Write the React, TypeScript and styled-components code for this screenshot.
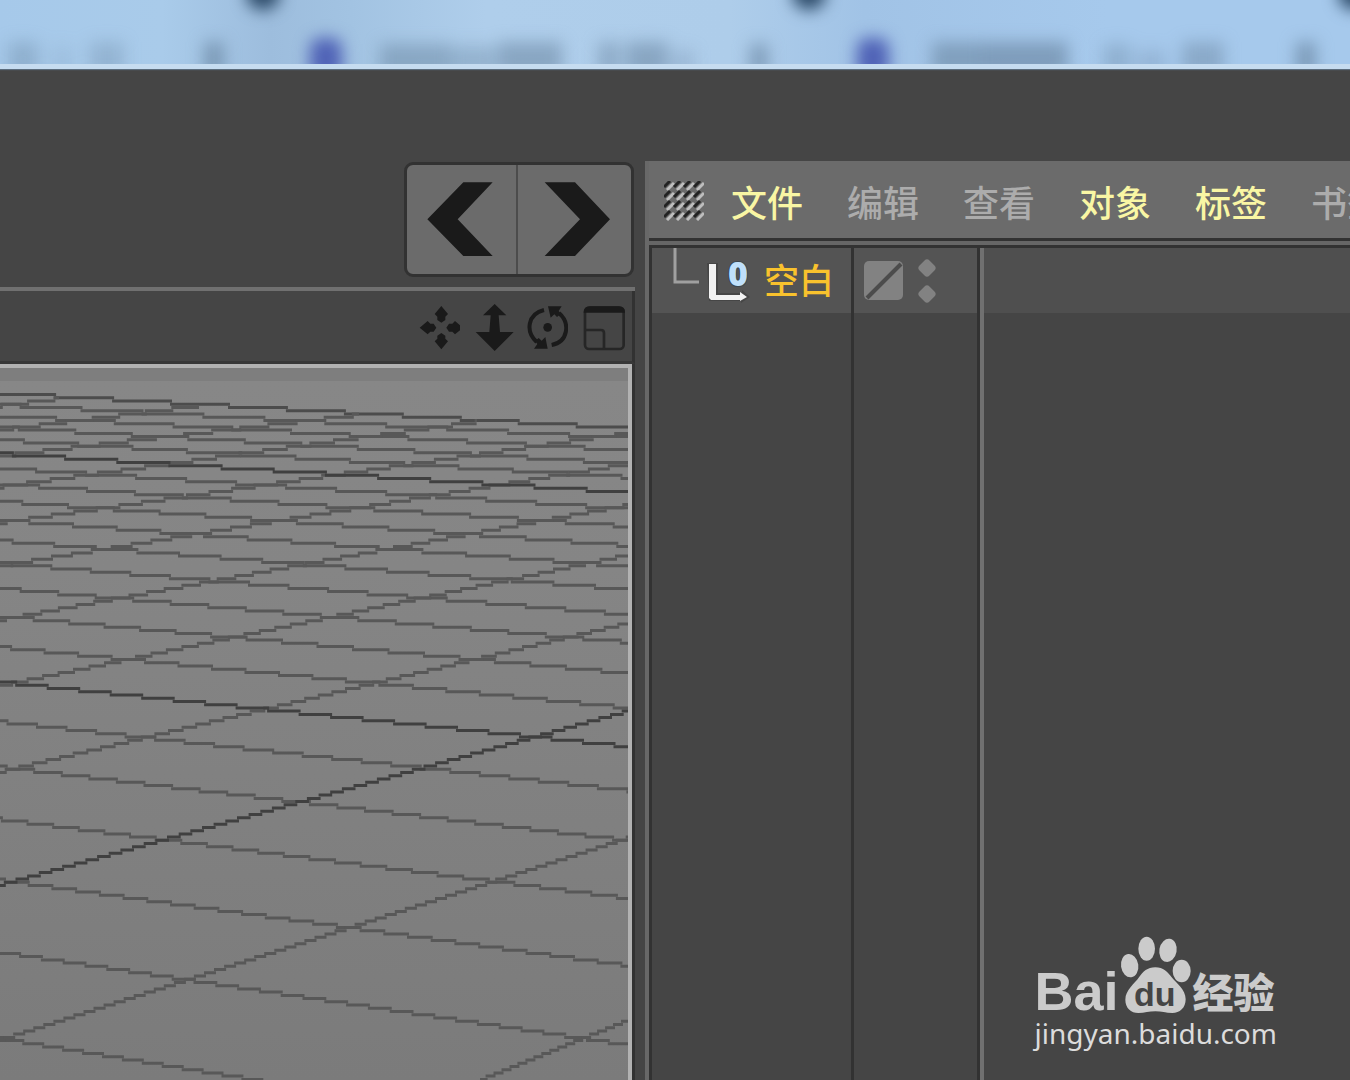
import React from "react";
import styled, { createGlobalStyle } from "styled-components";

const color = {
  base: "#454545",
  raised: "#6b6b6b",
  edge: "#323232",
  ink: "#1a1a1a",
  mark: "#cbcbcb",
};

const cjk = `"Noto Sans CJK SC", "Noto Sans", sans-serif`;

const GlobalStyle = createGlobalStyle`
  *, *::before, *::after { box-sizing: border-box; }
  body { margin: 0; background: ${color.base}; font-family: ${cjk}; }
`;

const Page = styled.div`
  position: relative;
  display: flex;
  flex-direction: column;
  height: 100vh;
  overflow: hidden;
  background: ${color.base};
`;

const Backdrop = styled.header`
  flex: none;
  height: 69px;
  overflow: hidden;
  background: linear-gradient(90deg, #a6c9ea 0%, #a9cbea 12%, #9dbddd 20%, #a2c3e2 26%, #afceeb 36%, #aecdea 54%, #a1c3e6 64%, #a6c9ec 82%, #a6c9ec 100%);
  border-bottom: 5px solid #c6dcf0;
  box-shadow: 0 1px 1px #5b6c7c;

  svg {
    display: block;
    width: 100%;
    height: 64px;
  }
`;

const Workspace = styled.main`
  flex: 1;
  min-height: 0;
  display: grid;
  grid-template-columns: minmax(0, 635fr) minmax(0, 715fr);
`;

const LeftColumn = styled.section`
  display: flex;
  flex-direction: column;
  min-height: 0;
  padding-top: 93px;
`;

const HistoryButtons = styled.div`
  align-self: flex-end;
  display: flex;
  width: 230px;
  height: 115px;
  margin: 0 1px 10px 0;
  overflow: hidden;
  border: 3px solid ${color.edge};
  border-radius: 9px;
  background: ${color.raised};
`;

const HistoryButton = styled.button<{ $divided?: boolean }>`
  flex: ${(p) => (p.$divided ? "0 0 111px" : "1")};
  padding: 0;
  border: 0;
  border-right: ${(p) => (p.$divided ? "2px solid #4c4c4c" : "0")};
  background: none;
  color: ${color.ink};

  svg {
    display: block;
    margin: 0 auto;
  }
`;

const ViewPanel = styled.div`
  flex: 1;
  min-height: 0;
  display: flex;
  flex-direction: column;
  border-top: 4px solid #707070;
`;

const ViewTools = styled.div`
  display: flex;
  justify-content: flex-end;
  gap: 10px;
  height: 73px;
  padding: 12px 6px 0 0;
  border-right: 3px solid ${color.edge};
  border-bottom: 3px solid #383838;
`;

const ToolButton = styled.button`
  height: 48px;
  padding: 0;
  border: 0;
  background: none;
  color: ${color.ink};

  svg {
    display: block;
  }
`;

const Canvas = styled.div`
  flex: 1;
  min-height: 0;
  display: flex;
  border-right: 3px solid ${color.edge};

  svg {
    flex: 1;
    min-width: 0;
    height: 100%;
    border-top: 4px solid #b2b2b2;
    border-right: 4px solid #b2b2b2;
    background: linear-gradient(#7e7e7e 0 13px, #878787 13px, #858585 200px, #7b7b7b 100%);
  }
`;

const ObjectManager = styled.section`
  display: flex;
  flex-direction: column;
  min-width: 0;
  min-height: 0;
  margin: 92px 0 0 10px;
  border-left: 4px solid #686868;
`;

const MenuBar = styled.nav`
  display: flex;
  align-items: center;
  gap: 44px;
  height: 84px;
  padding: 0 0 4px 15px;
  overflow: hidden;
  background: linear-gradient(${color.raised} 0 77px, ${color.edge} 77px 80px, #666 80px);
`;

const Grip = styled.svg`
  flex: none;
  margin-right: -17px;
`;

const MenuItem = styled.button<{ $active?: boolean }>`
  flex: none;
  padding: 0;
  border: 0;
  background: none;
  color: ${(p) => (p.$active ? "#f9f6a4" : "#acacac")};
  font: 500 36px/52px ${cjk};
  white-space: nowrap;
`;

const ObjectList = styled.div`
  flex: 1;
  min-height: 0;
  display: grid;
  grid-template-columns: 202px 126px minmax(0, 1fr);
  border-top: 3px solid ${color.edge};
  border-left: 3px solid ${color.edge};
`;

const Column = styled.div<{ $divided?: boolean; $lit?: boolean }>`
  border-left: ${(p) => (p.$lit ? "4px solid #707070" : "0")};
  border-right: ${(p) => (p.$divided ? `3px solid ${color.edge}` : "0")};
`;

const Cell = styled.div<{ $dim?: boolean }>`
  display: flex;
  align-items: center;
  height: 65px;
  background: ${(p) => (p.$dim ? "#4f4f4f" : "#545454")};

  svg {
    flex: none;
  }
`;

const ObjectName = styled.button`
  padding: 0 0 4px 12px;
  border: 0;
  background: none;
  color: #f9c22d;
  font: 500 35px/52px ${cjk};
  white-space: nowrap;
`;

const CellButton = styled.button`
  padding: 0;
  margin-left: 10px;
  border: 0;
  background: none;
  color: #828282;

  svg {
    display: block;
  }
`;

const Watermark = styled.a`
  position: absolute;
  right: 73px;
  bottom: 28px;
  display: flex;
  flex-direction: column;
  color: ${color.mark};
  text-decoration: none;
`;

const Brand = styled.span`
  display: flex;
  align-items: flex-end;
  height: 78px;
`;

const Latin = styled.span`
  font: 700 54px/46px "Liberation Sans", Arial, sans-serif;
`;

const Han = styled.span`
  font: 900 41px/48px ${cjk};
`;

const Address = styled.span`
  font: 400 28px/38px "Noto Sans", sans-serif;
  color: #dcdcdc;
`;

/* ---- perspective floor grid ---- */

const PITCH = 3.23;
const FIRST_ROW = 26.6;
const WIDTH = 628;

type GridLine = { x0: number; y0: number; x1: number; y1: number; strong?: boolean };

const horizonEdge: GridLine = { x0: 0, y0: 25.2, x1: WIDTH, y1: 60.2 };

const receding: GridLine[] = Array.from({ length: 21 }, (_, i) => {
  const n = i - 4;
  return {
    x0: 0,
    y0: 9506 / (26 - n) - 280,
    x1: WIDTH,
    y1: 10675 / (26.1 - n) - 284.5,
    strong: n === 0 || n === 10,
  };
});

const crossing: GridLine[] = [
  { x0: 0, y0: 38, x1: 57, y1: 31 },
  { x0: 0, y0: 62, x1: 197, y1: 38 },
  { x0: 0, y0: 88, x1: 357, y1: 47 },
  { x0: 0, y0: 119, x1: 475, y1: 54 },
  { x0: 0, y0: 155, x1: WIDTH, y1: 65 },
  { x0: 0, y0: 198, x1: WIDTH, y1: 96 },
  { x0: 0, y0: 252, x1: WIDTH, y1: 137 },
  { x0: 0, y0: 318, x1: WIDTH, y1: 187 },
  { x0: 0, y0: 404, x1: WIDTH, y1: 255 },
  { x0: 0, y0: 517, x1: WIDTH, y1: 343, strong: true },
  { x0: 0, y0: 672, x1: WIDTH, y1: 470 },
  { x0: 480, y0: 712, x1: WIDTH, y1: 652 },
];

/* Breaks a slanted line into the level runs of an aliased raster line. */
function stepped({ x0, y0, x1, y1 }: GridLine): string {
  const slope = (y1 - y0) / (x1 - x0);
  const row = (y: number) => Math.round((y - FIRST_ROW) / PITCH);
  const from = row(y0);
  const to = row(y1);
  const dir = to >= from ? 1 : -1;
  let x = x0;
  let d = "";
  for (let r = from; dir > 0 ? r <= to : r >= to; r += dir) {
    const boundary = FIRST_ROW + (r + dir / 2) * PITCH;
    const end = Math.min(x1, x0 + (boundary - y0) / slope);
    d += `M${x.toFixed(1)} ${(FIRST_ROW + r * PITCH).toFixed(1)}H${(end + 2).toFixed(1)}`;
    x = end;
  }
  return d;
}

const FloorGrid = () => (
  <svg viewBox="0 0 628 712" preserveAspectRatio="xMinYMin slice" role="img" aria-label="透视视图">
    {[horizonEdge, ...receding, ...crossing]
      .sort((a, b) => Number(!!a.strong) - Number(!!b.strong))
      .map((line, i) => (
        <path
          key={i}
          d={stepped(line)}
          fill="none"
          strokeWidth="3"
          stroke={line.strong ? "#404040" : line === horizonEdge ? "#4c4c4c" : "#585858"}
        />
      ))}
  </svg>
);

/* ---- blurred window strip ---- */

const smudges = [
  [8, 30, 24, 0.4], [50, 24, 20, 0.15], [90, 34, 24, 0.35], [204, 20, 24, 0.75],
  [380, 70, 22, 0.55], [450, 46, 20, 0.4], [498, 64, 24, 0.6], [598, 22, 24, 0.5],
  [626, 42, 24, 0.6], [672, 22, 16, 0.3], [750, 18, 22, 0.7], [932, 48, 24, 0.65],
  [980, 88, 24, 0.7], [1104, 26, 22, 0.4], [1136, 30, 16, 0.3], [1182, 42, 24, 0.5],
  [1296, 20, 24, 0.75],
];

const BlurredStrip = () => (
  <svg viewBox="0 0 1350 64" preserveAspectRatio="none" aria-hidden="true">
    <defs>
      <filter id="soft" filterUnits="userSpaceOnUse" x="-40" y="-60" width="1430" height="200" colorInterpolationFilters="sRGB">
        <feGaussianBlur stdDeviation="8 8" />
      </filter>
    </defs>
    <g filter="url(#soft)">
      {smudges.map(([x, w, h, o], i) => (
        <rect key={i} x={x} y={66 - h} width={w} height={h + 10} fill="#6f8ca8" opacity={o} />
      ))}
      {[326, 873].map((x) => (
        <rect key={x} x={x - 16} y="38" width="32" height="42" rx="10" fill="#4f62b6" />
      ))}
      {[263, 809, 1355].map((x) => (
        <ellipse key={x} cx={x} cy="-6" rx="17" ry="16" fill="#2c4a68" />
      ))}
    </g>
  </svg>
);

/* ---- icons ---- */

const MoveIcon = () => (
  <svg width="44" height="48" viewBox="78 459 132 144" fill="currentColor" aria-hidden="true">
    <path d="M154 468l20 24-8 8v10l-12 8-12-8v-10l-8-8zM154 598l20-24-8-8v-9l-12-8-12 8v9l-8 8zM89 533l24-20 8 8h10l8 12-8 12h-10l-8 8zM219 533l-24-20-8 8h-10l-8 12 8 12h10l8 8z" />
  </svg>
);

const DollyIcon = () => (
  <svg width="44" height="48" viewBox="240 459 132 144" fill="currentColor" aria-hidden="true">
    <path d="M314 462l35 34h-23l4 50h41l-57 57-57-57h41l4-50h-23z" />
  </svg>
);

const OrbitIcon = () => (
  <svg width="44" height="48" viewBox="402 459 132 144" fill="none" stroke="currentColor" aria-hidden="true">
    <path d="M462 480C412 492 406 545 440 576M485 585C534 576 542 520 507 489" strokeWidth="12" />
    <path d="M474 469h41l-9 14 7 8-12 10-8-8-11 10zM432 596h41l-7-35-11 11-9-8-11 9 7 9z" fill="currentColor" stroke="none" />
    <circle cx="473" cy="532" r="13" fill="currentColor" stroke="none" />
  </svg>
);

const MaximizeIcon = () => (
  <svg width="48" height="48" viewBox="564 459 144 144" fill="none" stroke="currentColor" aria-hidden="true">
    <rect x="585" y="473" width="116" height="124" rx="12" strokeWidth="8" stroke="#262626" />
    <path d="M581 488q0-19 19-19h86q19 0 19 19z" fill="currentColor" stroke="none" />
    <path d="M585 540h48q9 0 9 9v48" strokeWidth="8" stroke="#262626" />
  </svg>
);

const HatchGrip = () => (
  <Grip width="40" height="40" viewBox="0 0 40 40" aria-hidden="true">
    {Array.from({ length: 16 }, (_, i) => {
      const x = (i % 4) * 10;
      const y = Math.floor(i / 4) * 10;
      return (
        <g key={i} strokeWidth="3">
          <path d={`M${x} ${y + 6}l6-6`} stroke="#222" />
          <path d={`M${x + 3} ${y + 9}l7-7`} stroke="#bdbdbd" />
        </g>
      );
    })}
  </Grip>
);

const NullObjectIcon = () => (
  <svg width="100" height="65" viewBox="0 0 100 65" aria-hidden="true">
    <path d="M23 0V34H47" fill="none" stroke="#a0a0a0" strokeWidth="3" />
    <path d="M55 15h11v30h24v-3l8 7-9 6v-2H57z" fill="#3d3d3d" opacity="0.6" />
    <path d="M57 16h7v31h24v-3l7 5-7 4v-1H59l-2-2z" fill="#f2f2f2" />
    <text x="86" y="38" textAnchor="middle" fontFamily="Open Sans, sans-serif" fontWeight="800" fontSize="34" fill="#bfe0fb" stroke="#3b4650" strokeWidth="2" paintOrder="stroke">
      0
    </text>
  </svg>
);

const Paw = () => (
  <svg width="74" height="78" viewBox="291 48 222 234" aria-hidden="true">
    <g fill={color.mark}>
      <ellipse cx="323" cy="137" rx="26" ry="35" transform="rotate(-8 323 137)" />
      <ellipse cx="374" cy="86" rx="25" ry="36" />
      <ellipse cx="438" cy="91" rx="26" ry="35" transform="rotate(10 438 91)" />
      <ellipse cx="479" cy="153" rx="27" ry="34" />
      <path d="M400 142c24 0 37 14 49 30 14 18 42 36 42 66 0 26-18 41-40 41-20 0-32-5-51-5s-32 5-51 5c-22 0-39-15-39-40 0-29 28-48 41-67 12-17 25-30 49-30z" />
    </g>
    <text x="398" y="257" textAnchor="middle" fontFamily="Liberation Sans, Arial, sans-serif" fontWeight="700" fontSize="102" fill={color.base}>
      du
    </text>
  </svg>
);

const menus = [
  { label: "文件", active: true },
  { label: "编辑" },
  { label: "查看" },
  { label: "对象", active: true },
  { label: "标签", active: true },
  { label: "书签" },
];

const tools = [
  { label: "平移", Icon: MoveIcon },
  { label: "推拉", Icon: DollyIcon },
  { label: "旋转", Icon: OrbitIcon },
  { label: "切换视图", Icon: MaximizeIcon },
];

export default function App() {
  return (
    <Page>
      <GlobalStyle />
      <Backdrop>
        <BlurredStrip />
      </Backdrop>
      <Workspace>
        <LeftColumn>
          <HistoryButtons>
            <HistoryButton $divided aria-label="后退">
              <svg width="109" height="109" viewBox="51 45 327 327" fill="currentColor" aria-hidden="true">
                <path d="M112 208L220 97h88L203 208l105 110h-88z" />
              </svg>
            </HistoryButton>
            <HistoryButton aria-label="前进">
              <svg width="109" height="109" viewBox="390 45 327 327" fill="currentColor" aria-hidden="true">
                <path d="M660 208L555 97h-91l106 111-106 110h91z" />
              </svg>
            </HistoryButton>
          </HistoryButtons>
          <ViewPanel>
            <ViewTools>
              {tools.map(({ label, Icon }) => (
                <ToolButton key={label} aria-label={label}>
                  <Icon />
                </ToolButton>
              ))}
            </ViewTools>
            <Canvas>
              <FloorGrid />
            </Canvas>
          </ViewPanel>
        </LeftColumn>
        <ObjectManager>
          <MenuBar>
            <HatchGrip />
            {menus.map((m) => (
              <MenuItem key={m.label} $active={m.active}>
                {m.label}
              </MenuItem>
            ))}
          </MenuBar>
          <ObjectList>
            <Column $divided>
              <Cell>
                <NullObjectIcon />
                <ObjectName>空白</ObjectName>
              </Cell>
            </Column>
            <Column $divided>
              <Cell>
                <CellButton aria-label="图层">
                  <svg width="39" height="39" viewBox="0 0 39 39" aria-hidden="true">
                    <rect width="39" height="39" rx="5" fill="currentColor" />
                    <path d="M3 37L37 3" stroke="#4c4c4c" strokeWidth="4" />
                  </svg>
                </CellButton>
                <CellButton aria-label="可见性">
                  <svg width="28" height="46" viewBox="0 0 28 46" fill="currentColor" stroke="currentColor" strokeWidth="7" strokeLinejoin="round" aria-hidden="true">
                    <path d="M14 5l5 5-5 5-5-5zM14 31l5 5-5 5-5-5z" />
                  </svg>
                </CellButton>
              </Cell>
            </Column>
            <Column $lit>
              <Cell $dim />
            </Column>
          </ObjectList>
        </ObjectManager>
      </Workspace>
      <Watermark href="#jingyan">
        <Brand>
          <Latin>Bai</Latin>
          <Paw />
          <Han>经验</Han>
        </Brand>
        <Address>jingyan.baidu.com</Address>
      </Watermark>
    </Page>
  );
}
